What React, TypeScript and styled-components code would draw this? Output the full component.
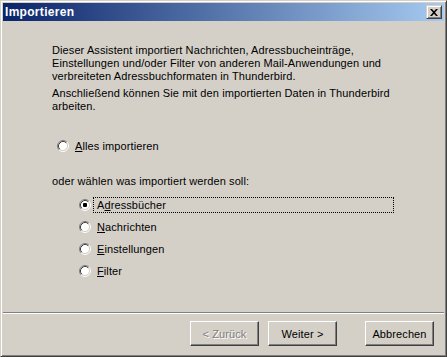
import React, { useState } from 'react';
import styled, { createGlobalStyle } from 'styled-components';

const COLORS = {
  face: '#d4d0c8',
  shadow: '#808080',
  darkShadow: '#404040',
  highlight: '#ffffff',
  titleStart: '#0a246a',
  titleEnd: '#a6caf0',
};

const GlobalStyle = createGlobalStyle`
  html, body {
    margin: 0;
    padding: 0;
    background: ${COLORS.face};
  }
  * {
    box-sizing: border-box;
  }
`;

type Choice = 'adress' | 'mail' | 'settings' | 'filter';

const RadioMark = ({ checked }: { checked: boolean }) => (
  <RadioSvg width='12' height='12' viewBox='0 0 12 12'>
    <circle cx='6' cy='6' r='4.5' fill='#fff' />
    <path d='M2.11 9.89 A5.5 5.5 0 0 1 9.89 2.11' stroke={COLORS.shadow} fill='none' />
    <path d='M9.89 2.11 A5.5 5.5 0 0 1 2.11 9.89' stroke='#fff' fill='none' />
    <path d='M2.82 9.18 A4.5 4.5 0 0 1 9.18 2.82' stroke={COLORS.darkShadow} fill='none' />
    <path d='M9.18 2.82 A4.5 4.5 0 0 1 2.82 9.18' stroke={COLORS.face} fill='none' />
    {checked && <rect x='4' y='4' width='4' height='4' rx='1' fill='#000' />}
  </RadioSvg>
);

const App = () => {
  const [all, setAll] = useState(false);
  const [choice, setChoice] = useState<Choice>('adress');

  const options: { id: Choice; key: string; rest: string; pre?: string }[] = [
    { id: 'adress', pre: 'A', key: 'd', rest: 'ressbücher' },
    { id: 'mail', key: 'N', rest: 'achrichten' },
    { id: 'settings', key: 'E', rest: 'instellungen' },
    { id: 'filter', key: 'F', rest: 'ilter' },
  ];

  return (
    <>
      <GlobalStyle />
      <Window>
        <TitleBar>
          <Title>Importieren</Title>
          <CloseButton aria-label='Schließen'>
            <svg width='8' height='7' viewBox='0 0 8 7'>
              <path d='M0 0h2l2 2.2L6 0h2L5 3.5 8 7H6L4 4.8 2 7H0l3-3.5z' fill='#000' />
            </svg>
          </CloseButton>
        </TitleBar>

        <Content>
          <Intro>
            Dieser Assistent importiert Nachrichten, Adressbucheinträge,
            <br />
            Einstellungen und/oder Filter von anderen Mail-Anwendungen und
            <br />
            verbreiteten Adressbuchformaten in Thunderbird.
          </Intro>
          <Intro $gap>
            Anschließend können Sie mit den importierten Daten in Thunderbird
            <br />
            arbeiten.
          </Intro>

          <RadioRow $indent={5} $top={25} onClick={() => setAll(true)}>
            <RadioMark checked={all} />
            <RadioLabel>
              <Key>A</Key>lles importieren
            </RadioLabel>
          </RadioRow>

          <Prompt>oder wählen was importiert werden soll:</Prompt>

          <OptionList>
            {options.map((o) => (
              <RadioRow
                key={o.id}
                $indent={27}
                $top={0}
                onClick={() => {
                  setAll(false);
                  setChoice(o.id);
                }}
              >
                <RadioMark checked={!all && choice === o.id} />
                <RadioLabel $focused={!all && choice === o.id}>
                  {o.pre}
                  <Key>{o.key}</Key>
                  {o.rest}
                </RadioLabel>
              </RadioRow>
            ))}
          </OptionList>
        </Content>

        <Footer>
          <ButtonRow>
            <Button disabled>&lt; Zurück</Button>
            <Button $gap={9}>Weiter &gt;</Button>
            <Button $gap={28}>Abbrechen</Button>
          </ButtonRow>
        </Footer>
      </Window>
    </>
  );
};

const Window = styled.div`
  width: 447px;
  height: 357px;
  display: flex;
  flex-direction: column;
  padding: 2px;
  background: ${COLORS.face};
  border: 1px solid;
  border-color: ${COLORS.face} ${COLORS.darkShadow} ${COLORS.darkShadow} ${COLORS.face};
  box-shadow: inset 1px 1px ${COLORS.highlight}, inset -1px -1px ${COLORS.shadow};
  font-family: 'Liberation Sans', Arial, sans-serif;
  font-size: 11px;
  letter-spacing: 0.1px;
  color: #000;
`;

const TitleBar = styled.div`
  height: 18px;
  flex-shrink: 0;
  display: flex;
  align-items: center;
  justify-content: space-between;
  padding: 0 2px 0 2px;
  background: linear-gradient(to right, ${COLORS.titleStart}, ${COLORS.titleEnd});
`;

const Title = styled.span`
  color: #fff;
  font-weight: bold;
  font-size: 12px;
  letter-spacing: 0.3px;
  line-height: 18px;
`;

const CloseButton = styled.button`
  width: 16px;
  height: 14px;
  padding: 0;
  display: flex;
  align-items: center;
  justify-content: center;
  background: ${COLORS.face};
  border: 1px solid;
  border-color: ${COLORS.face} ${COLORS.darkShadow} ${COLORS.darkShadow} ${COLORS.face};
  box-shadow: inset 1px 1px ${COLORS.highlight}, inset -1px -1px ${COLORS.shadow};
`;

const Content = styled.div`
  flex: 1;
  display: flex;
  flex-direction: column;
  padding: 23px 50px 0 49px;
`;

const Intro = styled.p<{ $gap?: boolean }>`
  margin: ${({ $gap }) => ($gap ? '4px' : '0')} 0 0;
  line-height: 13px;
  white-space: nowrap;
`;

const Prompt = styled.div`
  margin-top: 21px;
  line-height: 13px;
`;

const OptionList = styled.div`
  display: flex;
  flex-direction: column;
  gap: 6px;
  margin-top: 9px;
`;

const RadioRow = styled.div<{ $indent: number; $top: number }>`
  display: flex;
  align-items: center;
  height: 16px;
  margin-top: ${({ $top }) => $top}px;
  padding-left: ${({ $indent }) => $indent}px;
  cursor: default;
`;

const RadioSvg = styled.svg`
  flex-shrink: 0;
  display: block;
`;

const RadioLabel = styled.span<{ $focused?: boolean }>`
  flex: 1;
  height: 16px;
  line-height: 14px;
  margin-left: 2px;
  padding: 0 3px;
  border: 1px dotted ${({ $focused }) => ($focused ? '#000' : 'transparent')};
`;

const Key = styled.u`
  text-decoration: underline;
`;

const Footer = styled.div`
  flex-shrink: 0;
  border-top: 1px solid ${COLORS.shadow};
  box-shadow: inset 0 1px ${COLORS.highlight};
  padding: 8px 10px 8px 0;
`;

const ButtonRow = styled.div`
  display: flex;
  justify-content: flex-end;
`;

const Button = styled.button<{ $gap?: number }>`
  width: 69px;
  height: 25px;
  margin-left: ${({ $gap }) => $gap ?? 0}px;
  padding: 0;
  font-family: 'Liberation Sans', Arial, sans-serif;
  font-size: 11px;
  letter-spacing: 0.1px;
  color: #000;
  background: ${COLORS.face};
  border: 1px solid;
  border-color: ${COLORS.highlight} ${COLORS.darkShadow} ${COLORS.darkShadow} ${COLORS.highlight};
  box-shadow: inset -1px -1px ${COLORS.shadow};

  &:disabled {
    color: ${COLORS.shadow};
    text-shadow: 1px 1px 0 ${COLORS.highlight};
  }
`;

export default App;
